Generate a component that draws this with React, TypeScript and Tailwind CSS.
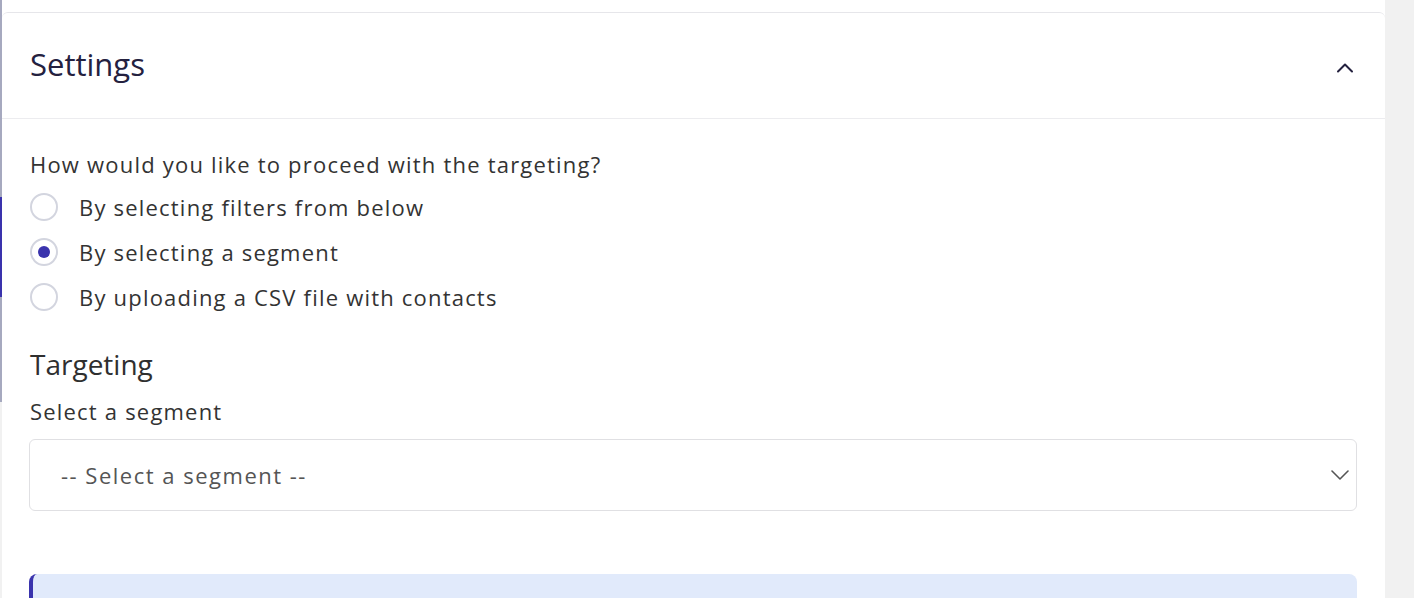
import React from 'react';

const options = [
  { label: 'By selecting filters from below', checked: false },
  { label: 'By selecting a segment', checked: true },
  { label: 'By uploading a CSV file with contacts', checked: false },
];

const Radio = ({ checked }: { checked: boolean }) => (
  <span className="flex h-[28px] w-[28px] shrink-0 items-center justify-center rounded-full border-2 border-[#d3d5df] bg-white">
    {checked && <span className="h-[12px] w-[12px] rounded-full bg-[#3a33ad]" />}
  </span>
);

const App = () => {
  return (
    <div className="flex min-h-[598px] w-full bg-[#f1f1f1] font-['Open_Sans','Noto_Sans',sans-serif]">
      {/* stepper line */}
      <div className="flex w-[2px] shrink-0 flex-col">
        <div className="h-[197px] bg-[#a6a9bf]" />
        <div className="h-[100px] bg-[#3a33ad]" />
        <div className="h-[105px] bg-[#a6a9bf]" />
      </div>

      <div className="flex w-[1383px] shrink-0 flex-col bg-white">
        <div className="h-[12px] bg-white" />
        <div className="rounded-t-[6px] border-t border-[#e6e6ea]">
          <div className="flex h-[106px] items-center justify-between border-b border-[#ececef] pl-[28px] pr-[28px]">
            <h2 className="mb-[4px] text-[31px] leading-[36px] text-[#24213f]">Settings</h2>
            <svg width="24" height="24" viewBox="0 0 24 24" fill="none" className="mt-[4px]">
              <path d="M5 15.5L12 8.5L19 15.5" stroke="#24213f" strokeWidth="2" strokeLinecap="round" strokeLinejoin="round" />
            </svg>
          </div>

          <div className="pl-[27px] pr-[28px] pt-[30px] text-[22px] tracking-[1.2px]">
            <div className="pl-[1px]">
              <p className="leading-[30px] text-[#333333]">How would you like to proceed with the targeting?</p>
              <div className="mt-[5px] flex flex-col">
                {options.map((o) => (
                  <label key={o.label} className="flex h-[45px] items-center gap-[21px]">
                    <Radio checked={o.checked} />
                    <span className="leading-[30px] text-[#333333]">{o.label}</span>
                  </label>
                ))}
              </div>

              <h3 className="mt-[29px] text-[28px] font-medium leading-[32px] tracking-normal text-[#2f2f2f]">Targeting</h3>
              <p className="mt-[16px] leading-[30px] text-[#333333]">Select a segment</p>
            </div>
            <div className="mt-[13px] flex h-[72px] items-center justify-between rounded-[6px] border border-[#e0e0e3] pl-[31px] pr-[7px]">
              <span className="tracking-[1.5px] text-[#555555]">-- Select a segment --</span>
              <svg width="18" height="10" viewBox="0 0 18 10" fill="none">
                <path d="M1 1L9 9L17 1" stroke="#555555" strokeWidth="1.6" strokeLinecap="round" strokeLinejoin="round" />
              </svg>
            </div>

            <div className="mt-[63px] h-[60px] rounded-[8px] border-l-4 border-[#3a33ad] bg-[#e1eafb]" />
          </div>
        </div>
      </div>
    </div>
  );
};

export default App;
